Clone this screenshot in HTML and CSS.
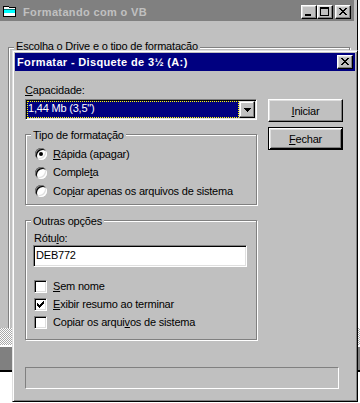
FILE: index.html
```html
<!DOCTYPE html>
<html lang="pt-BR">
<head>
  <meta charset="UTF-8">
  <title>Formatando com o VB</title>
  <link rel="stylesheet" href="styles.css">
</head>
<body>
  <!-- Janela principal (fundo) -->
  <div class="bg-window">
    <div class="bg-title">
      <svg class="app-icon" width="16" height="16" viewBox="0 0 16 16" shape-rendering="crispEdges">
        <path d="M1 2h5l1 1h7v10H1z" fill="#000"/>
        <path d="M2 3h4l1 1h6v8H2z" fill="#fff"/>
        <path d="M2 6h11v3H2z" fill="#0ff"/>
        <path d="M2 5h11v1H2z" fill="#008080"/>
      </svg>
      <span class="bg-caption">Formatando com o VB</span>
      <div class="caption-btns">
        <span class="cap-btn">
          <svg width="14" height="12" shape-rendering="crispEdges"><path d="M3 8h6v2H3z" fill="#000"/></svg>
        </span>
        <span class="cap-btn">
          <svg width="14" height="12" shape-rendering="crispEdges"><path d="M2 1h9v9H2zM3 3v6h7V3z" fill="#000" fill-rule="evenodd"/></svg>
        </span>
        <span class="cap-btn close-gap">
          <svg width="14" height="12" shape-rendering="crispEdges"><path d="M3 2h2v1H3zM9 2h2v1H9zM4 3h2v1H4zM8 3h2v1H8zM5 4h4v1H5zM6 5h2v1H6zM5 6h4v1H5zM4 7h2v1H4zM8 7h2v1H8zM3 8h2v1H3zM9 8h2v1H9z" fill="#000"/></svg>
        </span>
      </div>
    </div>
    <div class="bg-body">
      <div class="group bg-group">
        <span class="group-title bg-group-title">Escolha o Drive e o tipo de formatação</span>
      </div>
    </div>
  </div>
  <div class="bg-dither"></div>
  <div class="bg-bar"></div>

  <!-- Dialogo Formatar -->
  <div class="dialog">
    <div class="dlg-title">
      <span>Formatar - Disquete de 3½ (A:)</span>
      <span class="cap-btn">
        <svg width="14" height="12" shape-rendering="crispEdges"><path d="M3 2h2v1H3zM9 2h2v1H9zM4 3h2v1H4zM8 3h2v1H8zM5 4h4v1H5zM6 5h2v1H6zM5 6h4v1H5zM4 7h2v1H4zM8 7h2v1H8zM3 8h2v1H3zM9 8h2v1H9z" fill="#000"/></svg>
      </span>
    </div>

    <div class="dlg-body">
      <div class="dlg-top">
        <div class="dlg-left">
          <div class="field-label"><u>C</u>apacidade:</div>
          <div class="combo">
            <div class="combo-value">1,44 Mb (3,5")</div>
            <span class="combo-btn">
              <svg width="7" height="4" shape-rendering="crispEdges"><path d="M0 0h7v1H0zM1 1h5v1H1zM2 2h3v1H2zM3 3h1v1H3z" fill="#000"/></svg>
            </span>
          </div>

          <div class="group group-tipo">
            <span class="group-title">Tipo de formatação</span>
            <div class="option"><span class="radio checked"></span><span><u>R</u>ápida (apagar)</span></div>
            <div class="option"><span class="radio"></span><span>Comple<u>t</u>a</span></div>
            <div class="option"><span class="radio"></span><span>Cop<u>i</u>ar apenas os arquivos de sistema</span></div>
          </div>

          <div class="group group-outras">
            <span class="group-title">Outras opções</span>
            <div class="field-label label-rotulo">Rótu<u>l</u>o:</div>
            <div class="textbox">DEB772</div>
            <div class="checks">
              <div class="option"><span class="check"></span><span><u>S</u>em nome</span></div>
              <div class="option">
                <span class="check">
                  <svg width="7" height="7" shape-rendering="crispEdges"><path d="M6 0h1v1H6zM5 1h2v1H5zM0 2h1v1H0zM4 2h3v1H4zM0 3h2v1H0zM3 3h3v1H3zM0 4h5v1H0zM1 5h3v1H1zM2 6h1v1H2z" fill="#000"/></svg>
                </span>
                <span><u>E</u>xibir resumo ao terminar</span>
              </div>
              <div class="option"><span class="check"></span><span>Copiar os arqui<u>v</u>os de sistema</span></div>
            </div>
          </div>
        </div>

        <div class="dlg-right">
          <button class="btn"><u>I</u>niciar</button>
          <button class="btn default"><u>F</u>echar</button>
        </div>
      </div>

      <div class="status"></div>
    </div>
  </div>
</body>
</html>
```

FILE: styles.css
```css
body {
  margin: 0;
  width: 360px;
  height: 403px;
  overflow: hidden;
  background-color: #fff;
  font-family: "Liberation Sans", Arial, sans-serif;
  font-size: 11px;
  letter-spacing: -0.2px;
  color: #000;
}

u {
  text-decoration: underline;
}

/* janela de fundo */
.bg-window {
  width: 358px;
  height: 328px;
  box-sizing: border-box;
  background-color: #c0c0c0;
  border-right: 1px solid #000;
  overflow: hidden;
}

.bg-title {
  height: 21px;
  box-sizing: border-box;
  margin-right: 3px;
  padding: 3px 3px 0 2px;
  display: flex;
  align-items: center;
  background-color: #808080;
}

.bg-caption {
  margin-left: 5px;
  color: #c0c0c0;
  font-weight: bold;
  letter-spacing: 0.35px;
  line-height: 13px;
}

.caption-btns {
  margin-left: auto;
  display: flex;
}

.close-gap {
  margin-left: 2px;
}

.cap-btn {
  width: 16px;
  height: 14px;
  box-sizing: border-box;
  display: block;
  background-color: #c0c0c0;
  border: 1px solid;
  border-color: #fff #000 #000 #fff;
  box-shadow: inset -1px -1px 0 #808080, inset 1px 1px 0 #dfdfdf;
}

.cap-btn svg {
  display: block;
}

.bg-body {
  padding: 26px 7px 0 8px;
}

.bg-group {
  height: 400px;
}

.bg-dither {
  height: 17px;
  background-image: conic-gradient(#fff 25%, #a8a8a8 0 50%, #fff 0 75%, #a8a8a8 0);
  background-size: 2px 2px;
}

.bg-bar {
  margin-top: 2px;
  height: 23px;
  background-color: #808080;
  border-bottom: 2px solid #000;
}

/* caixas de grupo */
.group {
  position: relative;
  box-sizing: border-box;
  border: 1px solid #808080;
  box-shadow: 1px 1px 0 #fff, inset 1px 1px 0 #fff;
}

.group-title {
  position: absolute;
  top: -6px;
  left: 5px;
  padding: 0 2px;
  line-height: 13px;
  background-color: #c0c0c0;
  white-space: nowrap;
}

.bg-group-title {
  top: -8px;
}

/* dialogo */
.dialog {
  position: absolute;
  left: 12px;
  top: 50px;
  width: 346px;
  height: 352px;
  box-sizing: border-box;
  padding: 2px;
  background-color: #c0c0c0;
  border: 1px solid;
  border-color: #dfdfdf #000 #000 #dfdfdf;
  box-shadow: inset 1px 1px 0 #fff, inset -1px -1px 0 #808080;
}

.dlg-title {
  height: 18px;
  padding: 0 2px;
  display: flex;
  align-items: center;
  justify-content: space-between;
  background-color: #000080;
  color: #fff;
  font-weight: bold;
  letter-spacing: 0.35px;
}

.dlg-body {
  padding: 13px 0 0 10px;
}

.dlg-top {
  display: flex;
  gap: 11px;
}

.dlg-left {
  width: 232px;
}

.dlg-right {
  width: 75px;
  padding-top: 15px;
  display: flex;
  flex-direction: column;
  gap: 5px;
}

.field-label {
  line-height: 13px;
  margin-bottom: 2px;
}

.combo {
  height: 21px;
  box-sizing: border-box;
  padding: 1px;
  display: flex;
  background-color: #fff;
  border: 1px solid;
  border-color: #808080 #fff #fff #808080;
  box-shadow: inset 1px 1px 0 #000, inset -1px -1px 0 #dfdfdf;
}

.combo-value {
  flex: 1;
  height: 17px;
  padding-left: 1px;
  line-height: 15px;
  background-color: #000080;
  color: #fff;
  outline: 1px dotted #ff0;
  outline-offset: -1px;
}

.combo-btn {
  width: 16px;
  height: 17px;
  box-sizing: border-box;
  display: flex;
  align-items: center;
  justify-content: center;
  background-color: #c0c0c0;
  border: 1px solid;
  border-color: #dfdfdf #000 #000 #dfdfdf;
  box-shadow: inset -1px -1px 0 #808080, inset 1px 1px 0 #fff;
}

.combo-btn svg {
  display: block;
}

.group-tipo {
  margin-top: 14px;
  height: 71px;
  padding: 10px 0 0 9px;
  display: grid;
  grid-auto-rows: 18.5px;
}

.option {
  display: flex;
  align-items: center;
  gap: 6px;
  line-height: 13px;
  white-space: nowrap;
}

.radio {
  position: relative;
  width: 12px;
  height: 12px;
  flex: none;
  border-radius: 50%;
  background-color: #fff;
  box-shadow: inset 1px 1px 0 #808080, inset -1px -1px 0 #fff, inset 2px 2px 0 #000, inset -2px -2px 0 #dfdfdf;
}

.radio.checked::after {
  content: "";
  position: absolute;
  left: 4px;
  top: 4px;
  width: 4px;
  height: 4px;
  border-radius: 50%;
  background-color: #000;
}

.group-outras {
  margin-top: 15px;
  height: 120px;
  padding: 11px 0 0 7px;
}

.label-rotulo {
  margin: 0 0 0 1px;
}

.textbox {
  width: 214px;
  height: 22px;
  box-sizing: border-box;
  padding: 1px 0 0 2px;
  line-height: 16px;
  background-color: #fff;
  border: 1px solid;
  border-color: #808080 #fff #fff #808080;
  box-shadow: inset 1px 1px 0 #000, inset -1px -1px 0 #dfdfdf;
}

.checks {
  margin: 10px 0 0 1px;
  display: grid;
  grid-auto-rows: 18px;
}

.check {
  width: 13px;
  height: 13px;
  flex: none;
  box-sizing: border-box;
  display: flex;
  align-items: center;
  justify-content: center;
  background-color: #fff;
  border: 1px solid;
  border-color: #808080 #fff #fff #808080;
  box-shadow: inset 1px 1px 0 #000, inset -1px -1px 0 #dfdfdf;
}

.check svg {
  display: block;
}

.btn {
  width: 75px;
  height: 23px;
  padding: 0;
  font: inherit;
  letter-spacing: inherit;
  color: #000;
  background-color: #c0c0c0;
  border: 1px solid;
  border-color: #fff #000 #000 #fff;
  box-shadow: inset -1px -1px 0 #808080, inset 1px 1px 0 #dfdfdf;
}

.btn.default {
  border-color: #000;
  box-shadow: inset 1px 1px 0 #fff, inset -1px -1px 0 #000, inset 2px 2px 0 #dfdfdf, inset -2px -2px 0 #808080;
}

.status {
  margin-top: 27px;
  width: 314px;
  height: 22px;
  box-sizing: border-box;
  border: 1px solid;
  border-color: #808080 #fff #fff #808080;
}
```
